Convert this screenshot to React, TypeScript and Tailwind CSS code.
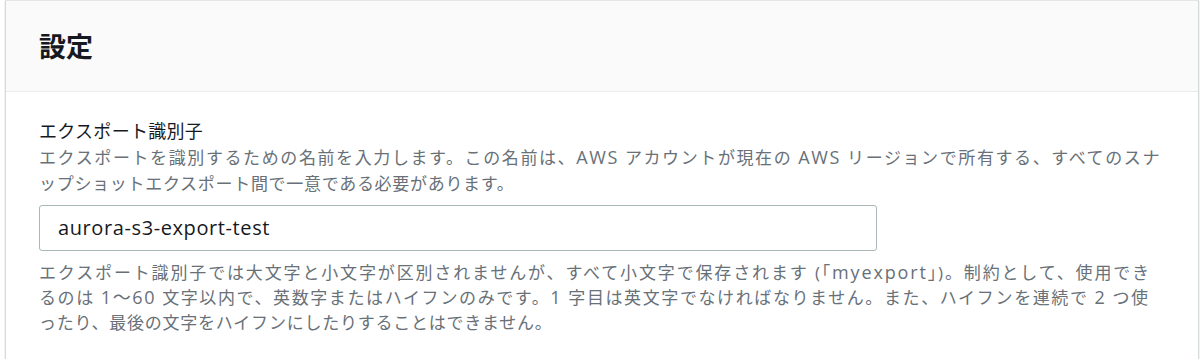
import React from "react";

const font = { fontFamily: '"Open Sans", "Noto Sans CJK JP", sans-serif' };

export default function App() {
  return (
    <div className="w-[1200px] h-[359px] bg-white overflow-hidden" style={font}>
      <div className="ml-[5px] mr-[1px] border-t border-l border-r border-t-[#e4e6e6] border-l-[#d5dbdb] border-r-[#d5dbdb] bg-white shadow-[0_1px_1px_0_rgba(0,28,36,0.3)] h-[400px]">
        <div className="h-[91px] bg-[#fafafa] border-b border-[#eaeded] flex items-center pl-[33px]">
          <h2 className="text-[27px] font-bold text-[#16191f] leading-none">設定</h2>
        </div>
        <div className="pl-[33px] pr-[20px] pt-[26px]">
          <div className="text-[18px] leading-[26px] text-[#16191f] tracking-[0.3px]">エクスポート識別子</div>
          <div className="text-[17px] leading-[26px] text-[#687078] whitespace-nowrap">
            <div className="tracking-[1.6px]">エクスポートを識別するための名前を入力します。この名前は、<span className="text-[18px]">AWS</span> アカウントが現在の <span className="text-[18px]">AWS</span> リージョンで所有する、すべてのスナ</div>
            <div className="tracking-[0.7px]">ップショットエクスポート間で一意である必要があります。</div>
          </div>
          <div className="mt-[8px] w-[838px] h-[46px] border border-[#aab7b8] rounded-[3px] flex items-center pl-[18px] text-[20px] text-[#16191f] tracking-[0.6px]">
            aurora-s3-export-test
          </div>
          <div className="mt-[9px] text-[17px] leading-[25px] text-[#687078] whitespace-nowrap">
            <div className="tracking-[1.85px]">エクスポート識別子では大文字と小文字が区別されませんが、すべて小文字で保存されます (「<span className="text-[18px]">myexport</span>」)。制約として、使用でき</div>
            <div className="tracking-[1.6px]">るのは <span className="text-[18px]">1〜60</span> 文字以内で、英数字またはハイフンのみです。<span className="text-[18px]">1</span> 字目は英文字でなければなりません。また、ハイフンを連続で <span className="text-[18px]">2</span> つ使</div>
            <div className="tracking-[0.75px]">ったり、最後の文字をハイフンにしたりすることはできません。</div>
          </div>
        </div>
      </div>
    </div>
  );
}
